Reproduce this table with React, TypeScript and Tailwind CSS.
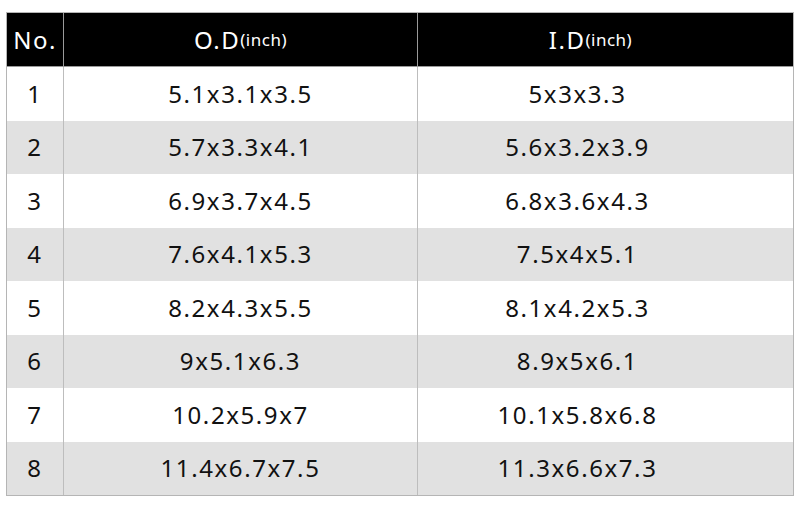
const rows = [
  { no: '1', od: '5.1x3.1x3.5', id: '5x3x3.3' },
  { no: '2', od: '5.7x3.3x4.1', id: '5.6x3.2x3.9' },
  { no: '3', od: '6.9x3.7x4.5', id: '6.8x3.6x4.3' },
  { no: '4', od: '7.6x4.1x5.3', id: '7.5x4x5.1' },
  { no: '5', od: '8.2x4.3x5.5', id: '8.1x4.2x5.3' },
  { no: '6', od: '9x5.1x6.3', id: '8.9x5x6.1' },
  { no: '7', od: '10.2x5.9x7', id: '10.1x5.8x6.8' },
  { no: '8', od: '11.4x6.7x7.5', id: '11.3x6.6x7.3' },
];

export default function App() {
  return (
    <div
      className="w-[800px] h-[513px] bg-white pt-[12px] pl-[6px]"
      style={{ fontFamily: '"Noto Sans", "Noto Sans CJK JP", sans-serif' }}
    >
      <div className="w-[788px] border border-[#b5b5b5]">
        {/* Header */}
        <div className="flex h-[54px] bg-black text-white text-[24px] tracking-[1.5px] border-b border-[#9a9a9a]">
          <div className="w-[57px] flex items-center justify-center border-r border-[#9a9a9a]">No.</div>
          <div className="w-[354px] flex items-center justify-center border-r border-[#9a9a9a]">
            O.D<span className="text-[17px] tracking-[0.5px]">(inch)</span>
          </div>
          <div className="flex-1 flex items-center justify-center pr-[30px]">
            I.D<span className="text-[17px] tracking-[0.5px]">(inch)</span>
          </div>
        </div>

        {/* Rows */}
        {rows.map((r, i) => (
          <div
            key={r.no}
            className={`flex h-[53.5px] text-[24px] tracking-[1.6px] text-[#111] ${i % 2 === 1 ? 'bg-[#e1e1e1]' : 'bg-white'}`}
          >
            <div className="w-[57px] flex items-center justify-center border-r border-[#bdbdbd]">{r.no}</div>
            <div className="w-[354px] flex items-center justify-center border-r border-[#bdbdbd]">{r.od}</div>
            <div className="flex-1 flex items-center justify-center pr-[56px]">{r.id}</div>
          </div>
        ))}
      </div>
    </div>
  );
}
